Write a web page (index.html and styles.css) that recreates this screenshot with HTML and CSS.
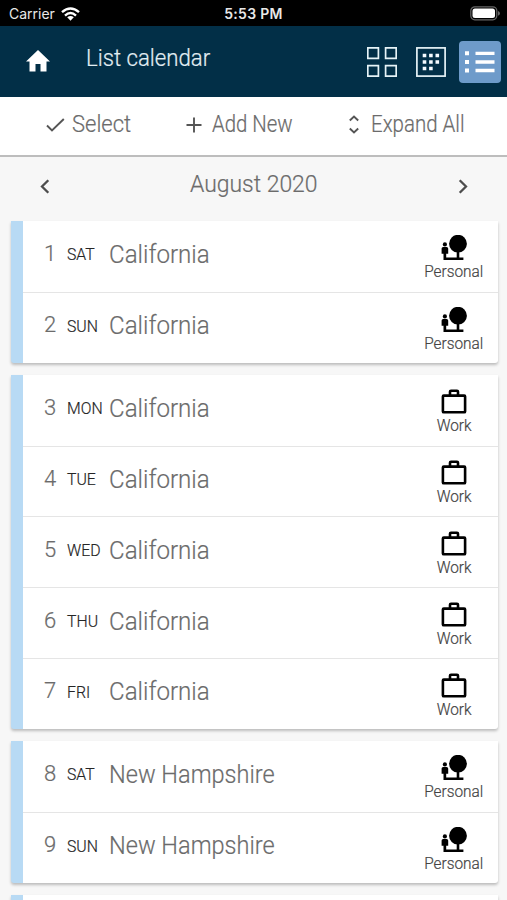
FILE: index.html
```html
<!DOCTYPE html>
<html lang="en">
<head>
<meta charset="utf-8">
<title>List calendar</title>
<link rel="stylesheet" href="styles.css">
</head>
<body>
<svg class="sprite" aria-hidden="true">
  <symbol id="personal" viewBox="0 0 26 26">
    <circle cx="17" cy="8.700" r="8.900"/>
    <path d="M15.700 16h2.600v6.400h4.100v2.600H2.500v-6.300H.6v-5.200q0-1.600 1.600-1.600h3.400q1.600 0 1.600 1.600v5.200H5.200v3.700h10.500z"/>
    <circle cx="3.900" cy="9.400" r="2.100"/>
  </symbol>
  <symbol id="work" viewBox="0 0 26 26">
    <path d="M2.800 6.600h20.400q.9 0 .9.900v14.900q0 .9-.9.900H2.800q-.9 0-.9-.9V7.500q0-.9.900-.9zM9 6.500V2.700q0-1 1-1h6q1 0 1 1v3.800" fill="none" stroke="#000" stroke-width="2.600"/>
  </symbol>
</svg>
<div class="status">
  <div class="carrier"><span>Carrier</span>
    <svg width="19" height="14" viewBox="0 0 19 14"><g fill="none" stroke="#fff" stroke-width="2.400"><path d="M1 5.200Q9.500-2.400 18 5.200M4 8.600Q9.500 3.600 15 8.600"/></g><path d="M6.200 10.300Q9.500 7.500 12.800 10.300L9.500 13.700z" fill="#fff"/></svg>
  </div>
  <span class="clock">5:53 PM</span>
  <svg class="battery" width="31" height="15" viewBox="0 0 31 15"><rect x=".8" y=".8" width="26" height="13" rx="4" fill="none" stroke="#666" stroke-width="1.200"/><rect x="2.500" y="2.500" width="22.500" height="9.600" rx="2.500" fill="#fff"/><path d="M28 5q2 1 2 2.400T28 9.800z" fill="#666"/></svg>
</div>
<header class="header">
  <svg class="home" width="24" height="22" viewBox="0 0 24 22"><path d="M12 0l12 11.500h-3.500V21.500h-6v-7.500h-5v7.500h-6V11.500H0z" fill="#fff"/></svg>
  <h1><span class="title">List calendar</span></h1>
  <div class="views">
    <svg width="30" height="30" viewBox="0 0 30 30"><path d="M.8.8h10.600v10.600H.8zM18.600.8h10.600v10.600H18.600zM.8 18.600h10.600v10.600H.8zM18.600 18.600h10.600v10.600H18.600z" fill="none" stroke="#e6f3f7" stroke-width="1.700"/></svg>
    <svg width="30" height="30" viewBox="0 0 30 30"><rect x=".9" y=".9" width="28.200" height="28.200" fill="none" stroke="#e6f3f7" stroke-width="1.700"/><path d="M6.700 8.500h3.600m2.800 0h3.600m2.800 0h3.600M6.700 15h3.600m2.800 0h3.600m2.800 0h3.600M6.700 21.500h3.600m2.800 0h3.600" stroke="#f5fbff" stroke-width="3.600"/></svg>
    <div class="active"><svg width="30" height="22" viewBox="0 0 30 22"><path d="M10.500 2.300h19M10.500 11h19M10.500 19.500h19" stroke="#fff" stroke-width="3.300"/><path d="M0 2.300h4M0 11h4M0 19.500h4" stroke="#fff" stroke-width="4"/></svg></div>
  </div>
</header>
<nav class="toolbar">
  <div class="tool"><svg width="19" height="14" viewBox="0 0 19 14"><path d="M1 7.500l5 5L17.800 1" fill="none" stroke="#555" stroke-width="1.900"/></svg><span class="select">Select</span></div>
  <div class="tool"><svg width="16" height="16" viewBox="0 0 16 16"><path d="M8 .5v15M.5 8h15" stroke="#555" stroke-width="1.900"/></svg><span class="add">Add New</span></div>
  <div class="tool"><svg width="10" height="19" viewBox="0 0 10 19"><path d="M.8 5.500L5 1.500l4.200 4M.8 13.500l4.200 4 4.200-4" fill="none" stroke="#555" stroke-width="1.900"/></svg><span class="expand">Expand All</span></div>
</nav>
<div class="month">
  <svg width="10" height="15" viewBox="0 0 10 15"><path d="M8.300 1.200L2 7.500l6.300 6.300" fill="none" stroke="#4d4d4d" stroke-width="2.300"/></svg>
  <h2><span class="month-name">August 2020</span></h2>
  <svg width="10" height="15" viewBox="0 0 10 15"><path d="M1.700 1.200L8 7.500l-6.300 6.300" fill="none" stroke="#4d4d4d" stroke-width="2.300"/></svg>
</div>
<main class="list">
  <section class="week">
    <div class="day"><span class="num">1</span><span class="dow">SAT</span><span class="place">California</span><div class="kind"><svg><use href="#personal"/></svg><span>Personal</span></div></div>
    <div class="day"><span class="num">2</span><span class="dow">SUN</span><span class="place">California</span><div class="kind"><svg><use href="#personal"/></svg><span>Personal</span></div></div>
  </section>
  <section class="week">
    <div class="day"><span class="num">3</span><span class="dow">MON</span><span class="place">California</span><div class="kind"><svg><use href="#work"/></svg><span>Work</span></div></div>
    <div class="day"><span class="num">4</span><span class="dow">TUE</span><span class="place">California</span><div class="kind"><svg><use href="#work"/></svg><span>Work</span></div></div>
    <div class="day"><span class="num">5</span><span class="dow">WED</span><span class="place">California</span><div class="kind"><svg><use href="#work"/></svg><span>Work</span></div></div>
    <div class="day"><span class="num">6</span><span class="dow">THU</span><span class="place">California</span><div class="kind"><svg><use href="#work"/></svg><span>Work</span></div></div>
    <div class="day"><span class="num">7</span><span class="dow">FRI</span><span class="place">California</span><div class="kind"><svg><use href="#work"/></svg><span>Work</span></div></div>
  </section>
  <section class="week">
    <div class="day"><span class="num">8</span><span class="dow">SAT</span><span class="place long">New Hampshire</span><div class="kind"><svg><use href="#personal"/></svg><span>Personal</span></div></div>
    <div class="day"><span class="num">9</span><span class="dow">SUN</span><span class="place long">New Hampshire</span><div class="kind"><svg><use href="#personal"/></svg><span>Personal</span></div></div>
  </section>
  <section class="week upcoming"></section>
</main>
</body>
</html>
```

FILE: styles.css
```css
* { box-sizing: border-box; }
html, body { margin: 0; height: 900px; overflow: hidden; }
body {
  display: flex;
  flex-direction: column;
  background: #f7f7f7;
  font-family: Roboto, "Liberation Sans", sans-serif;
  font-weight: 300;
  color: #6b6b6b;
  -webkit-text-stroke: .2px;
}
svg { display: block; flex: none; }
.sprite { width: 0; height: 0; position: absolute; }
h1, h2 { margin: 0; font-weight: 300; }
span { display: block; white-space: nowrap; transform-origin: 0 50%; }

.status {
  flex: none;
  height: 26px;
  background: #000;
  color: #e8e8e8;
  display: grid;
  grid-template-columns: 1fr auto 1fr;
  align-items: center;
  padding: 1px 5px 0 9px;
  font: 400 14px/24px Inter, sans-serif;
  -webkit-text-stroke: 0;
}
.carrier { display: flex; align-items: center; gap: 6px; }
.clock { font-weight: 600; letter-spacing: .3px; margin-left: -4px; }
.battery { justify-self: end; margin-right: 1px; }

.header {
  flex: none;
  height: 71px;
  background: #022f47;
  display: flex;
  align-items: center;
  padding: 0 6px 0 26px;
}
.home { margin-top: -2px; }
.header h1 { flex: 1; margin-left: 36px; color: #e3eef3; font-size: 23px; line-height: 30px; padding-bottom: 6px; }
.views { display: flex; align-items: center; gap: 19px; }
.active {
  width: 42px;
  height: 42px;
  margin-left: -6px;
  border-radius: 4px;
  background: #6e9bca;
  display: grid;
  place-items: center;
}

.toolbar {
  flex: none;
  height: 60px;
  background: #fff;
  border-bottom: 2px solid #bdbdbd;
  display: grid;
  grid-template-columns: 140px 161px 1fr;
  align-items: center;
  padding: 0 0 3px 46px;
  font-size: 23px;
  line-height: 28px;
}
.tool { display: flex; align-items: center; gap: 7px; }
.tool:nth-child(2) { gap: 10px; }
.tool:nth-child(3) { padding-left: 2px; gap: 12px; }

.month {
  flex: none;
  height: 64px;
  display: flex;
  justify-content: space-between;
  align-items: center;
  padding: 0 39px 5px 40px;
}
.month h2 { width: 128px; font-size: 24px; line-height: 30px; padding-bottom: 5px; }

.list { flex: none; display: flex; flex-direction: column; gap: 12px; padding: 0 9px 0 11px; }
.week {
  background: #fff;
  border-left: 12px solid #b8daf4;
  border-radius: 0 0 3px 3px;
  box-shadow: 0 2px 3px rgba(0, 0, 0, .24);
}
.upcoming { height: 30px; }
.day {
  height: 70.85px;
  display: grid;
  grid-template-columns: 22px 42px 1fr 60px;
  align-items: center;
  padding: 0 14px 0 22px;
}
.day + .day { border-top: 1.5px solid #e5e5e5; }
.num { font-size: 22px; line-height: 30px; margin: -5px 0 0 -1px; }
.dow { font-size: 17px; line-height: 30px; color: #252525; margin-top: -4px; transform: scaleX(.93); }
.place { font-size: 26.5px; line-height: 32px; margin-top: -5px; transform: scaleX(.91); }
.long { transform: scaleX(.888); }
.kind { display: flex; flex-direction: column; align-items: center; color: #444; padding-top: 5px; }
.kind svg { width: 26px; height: 26px; }
.kind span { font-size: 16px; line-height: 20px; transform-origin: 50% 50%; transform: scaleX(.96); margin-top: 1px; }

.title, .select, .add, .expand, .month-name { width: max-content; }
.title { transform: scaleX(.965); }
.select { transform: scaleX(.955); }
.add { transform: scaleX(.885); }
.expand { transform: scaleX(.89); }
.month-name { transform: scaleX(.955); }
```
